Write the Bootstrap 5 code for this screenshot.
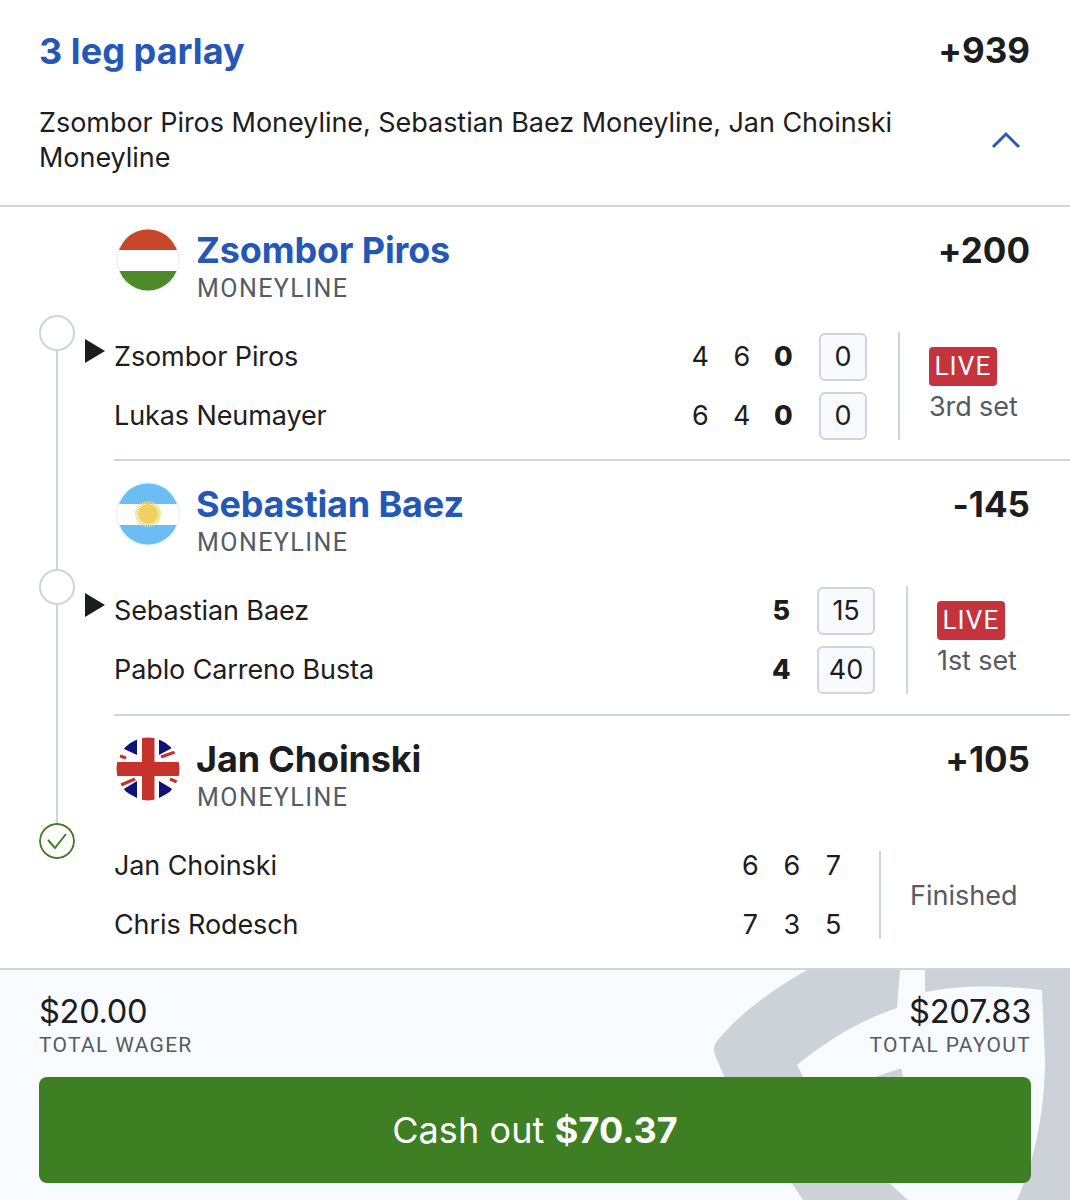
<!DOCTYPE html>
<html lang="en">
<head>
<meta charset="utf-8">
<title>3 leg parlay</title>
<link href="https://cdn.jsdelivr.net/npm/bootstrap@5.3.0/dist/css/bootstrap.min.css" rel="stylesheet">
<style>
html,body{margin:0;background:#fff}
body{font-family:"Inter","Liberation Sans",sans-serif;color:#1c1d1f;width:1070px;height:1200px;overflow:hidden;font-variant-ligatures:none}
.bet-head{height:207px;padding:0 40px 0 39px;border-bottom:2px solid #d0d4db}
.bet-top{height:101px}
.bet-title{font-size:36px;font-weight:700;color:#2557b7;line-height:1;letter-spacing:.05px}
.odds{font-size:35px;font-weight:700;line-height:1;color:#1c1d1f}
.bet-desc{font-size:27px;line-height:35px;width:870px;margin-top:4px;letter-spacing:-.04px}
.chev{width:30px;height:18px;margin-right:9px;margin-top:3px}
.legs-wrap{height:761px}
.tl-line{position:absolute;left:56px;top:144px;width:2px;height:474px;background:#d0d4db}
.tl-dot{position:absolute;left:39px;width:36px;height:36px;border-radius:50%;border:2px solid #d0d4db;background:#fff}
.tl-a{top:108px}.tl-b{top:362px}
.tl-c{top:616px;border:none;background:none}
.leg{margin-left:114px;padding-right:40px;height:254px;border-bottom:2px solid #d0d4db;padding-top:21px}
.leg+.leg{height:255px}
.leg-last{border-bottom:none}
.leg-head{height:83px;margin-left:2px}
.flag{width:64px;height:64px;flex:none;margin-right:17px}
.leg-name{font-size:36px;font-weight:700;line-height:44px;color:#2557b7;letter-spacing:-.15px;margin-left:-1px}
.leg-name.won{color:#1c1d1f}
.odds-leg{padding-top:5px}
.market{font-size:25px;line-height:30px;letter-spacing:1.45px;color:#555b63;font-family:"Roboto",sans-serif;margin-top:2px}
.score-block{margin-top:21px;height:108px;padding-right:13px}
.score-rows{flex:1 1 auto;display:flex;flex-direction:column;justify-content:space-between;padding-top:1px}
.score-row{height:48px;font-size:27px;letter-spacing:-.1px}
.p-name{position:relative;flex:1 1 auto}
.tri{position:absolute;left:-29px;top:2px;width:20px;height:24px}
.num{width:41.5px;text-align:center}
.num-b{font-weight:800}
.pt-box{width:48px;height:48px;border:2px solid #d0d4db;border-radius:6px;background:#f7faff;margin-left:15px;font-size:27px}
.pt-wide{width:58px}
.status{border-left:2px solid #d0d4db;padding-left:29px;margin-left:31px;color:#555b63;font-size:27px;line-height:34px;height:108px;flex:none;white-space:nowrap;letter-spacing:-.1px}
.live{display:inline-block;width:68px;height:39px;border-radius:4px;background:#c5333f;color:#fff;font-size:26px;line-height:39px;letter-spacing:1.2px;text-align:center;font-family:"Roboto",sans-serif;margin-top:-2px;margin-bottom:4px}
.st-1{width:119px}.st-2{width:111px}
.st-3{width:138px;margin-left:25px;height:88px;align-self:center;padding-top:1px;letter-spacing:0}
.foot{height:232px;background:#f8fbff;border-top:2px solid #d0d4db;padding:0 39px;overflow:hidden}
.mark-svg{position:absolute;left:0;top:-970px;width:1070px;height:1200px}
.foot-row{position:relative;height:107px;padding-top:21px}
.money{font-size:32.6px;line-height:40px;letter-spacing:-.3px}
.foot-lab{font-size:21px;line-height:26px;letter-spacing:1.3px;color:#555b63;font-family:"Roboto",sans-serif;margin-top:1px}
.cash{position:relative;width:992px;height:106px;background:#3d7f22;border:none;border-radius:8px;color:#fff;font-size:36px;padding:0;letter-spacing:.1px}
.cash b{font-weight:700}
.cash:hover,.cash:active{background:#3d7f22;color:#fff}
</style>
</head>
<body>
<header class="bet-head">
  <div class="bet-top d-flex justify-content-between align-items-center">
    <div class="bet-title">3 leg parlay</div>
    <div class="odds">+939</div>
  </div>
  <div class="d-flex justify-content-between align-items-center">
    <div class="bet-desc">Zsombor Piros Moneyline, Sebastian Baez Moneyline, Jan Choinski Moneyline</div>
    <svg class="chev" viewBox="0 0 30 18"><path d="M2 16 15 3 28 16" fill="none" stroke="#2a5bb0" stroke-width="3"/></svg>
  </div>
</header>

<main class="legs-wrap position-relative">
  <div class="tl-line"></div>
  <div class="tl-dot tl-a"></div>
  <div class="tl-dot tl-b"></div>
  <svg class="tl-dot tl-c" viewBox="0 0 36 36"><circle cx="18" cy="18" r="17" fill="#fff" stroke="#3d7f22" stroke-width="2"/><path d="M9 17 16 25 27 11" fill="none" stroke="#3d7f22" stroke-width="2"/></svg>

  <section class="leg">
    <div class="leg-head d-flex">
      <svg class="flag" viewBox="0 0 64 64"><defs><clipPath id="c1"><circle cx="32" cy="32" r="30.5"/></clipPath></defs><circle cx="32" cy="32" r="32" fill="#edf1ee"/><g clip-path="url(#c1)"><rect width="64" height="22" fill="#c8472a"/><rect y="22" width="64" height="21" fill="#fff"/><rect y="43" width="64" height="21" fill="#4f8a2a"/></g></svg>
      <div class="flex-grow-1">
        <div class="d-flex justify-content-between"><div class="leg-name">Zsombor Piros</div><div class="odds odds-leg">+200</div></div>
        <div class="market">MONEYLINE</div>
      </div>
    </div>
    <div class="score-block d-flex">
      <div class="score-rows">
        <div class="score-row d-flex align-items-center">
          <div class="p-name"><svg class="tri" viewBox="0 0 20 24"><path d="M0 0 20 12 0 24Z" fill="#1c1d1f"/></svg>Zsombor Piros</div>
          <div class="num">4</div><div class="num">6</div><div class="num num-b">0</div>
          <div class="pt-box d-flex align-items-center justify-content-center">0</div>
        </div>
        <div class="score-row d-flex align-items-center">
          <div class="p-name">Lukas Neumayer</div>
          <div class="num">6</div><div class="num">4</div><div class="num num-b">0</div>
          <div class="pt-box d-flex align-items-center justify-content-center">0</div>
        </div>
      </div>
      <div class="status st-1 d-flex flex-column justify-content-center align-items-start"><span class="live">LIVE</span><span>3rd set</span></div>
    </div>
  </section>

  <section class="leg">
    <div class="leg-head d-flex">
      <svg class="flag" viewBox="0 0 64 64"><defs><clipPath id="c2"><circle cx="32" cy="32" r="30.5"/></clipPath></defs><circle cx="32" cy="32" r="32" fill="#e9f4fc"/><g clip-path="url(#c2)"><rect width="64" height="22" fill="#6dbdf5"/><rect y="22" width="64" height="21" fill="#fff"/><rect y="43" width="64" height="21" fill="#6dbdf5"/></g><circle cx="32" cy="32" r="11.5" fill="none" stroke="#f0d873" stroke-width="3" stroke-dasharray="1.2 .8"/><circle cx="32" cy="32" r="10" fill="#f0d05e"/></svg>
      <div class="flex-grow-1">
        <div class="d-flex justify-content-between"><div class="leg-name">Sebastian Baez</div><div class="odds odds-leg">-145</div></div>
        <div class="market">MONEYLINE</div>
      </div>
    </div>
    <div class="score-block d-flex">
      <div class="score-rows">
        <div class="score-row d-flex align-items-center">
          <div class="p-name"><svg class="tri" viewBox="0 0 20 24"><path d="M0 0 20 12 0 24Z" fill="#1c1d1f"/></svg>Sebastian Baez</div>
          <div class="num num-b">5</div>
          <div class="pt-box pt-wide d-flex align-items-center justify-content-center">15</div>
        </div>
        <div class="score-row d-flex align-items-center">
          <div class="p-name">Pablo Carreno Busta</div>
          <div class="num num-b">4</div>
          <div class="pt-box pt-wide d-flex align-items-center justify-content-center">40</div>
        </div>
      </div>
      <div class="status st-2 d-flex flex-column justify-content-center align-items-start"><span class="live">LIVE</span><span>1st set</span></div>
    </div>
  </section>

  <section class="leg leg-last">
    <div class="leg-head d-flex">
      <svg class="flag" viewBox="0 0 64 64"><defs><clipPath id="c3"><circle cx="32" cy="32" r="31.5"/></clipPath></defs><g clip-path="url(#c3)"><rect width="64" height="64" fill="#fff"/><path d="M21 1V18L6 11ZM43 1V18L58 10ZM21 44V61L6 53ZM43 44V61L58 53Z" fill="#10127a"/><path d="M4 19 10 21M45 20 59 15M5 48 19 42M54 42 61 45" fill="none" stroke="#c5332c" stroke-width="3"/><rect x="26" y="0" width="12.5" height="64" fill="#c5332c"/><rect x="0" y="25" width="64" height="14" fill="#c5332c"/></g></svg>
      <div class="flex-grow-1">
        <div class="d-flex justify-content-between"><div class="leg-name won">Jan Choinski</div><div class="odds odds-leg">+105</div></div>
        <div class="market">MONEYLINE</div>
      </div>
    </div>
    <div class="score-block d-flex">
      <div class="score-rows">
        <div class="score-row d-flex align-items-center">
          <div class="p-name">Jan Choinski</div>
          <div class="num">6</div><div class="num">6</div><div class="num">7</div>
        </div>
        <div class="score-row d-flex align-items-center">
          <div class="p-name">Chris Rodesch</div>
          <div class="num">7</div><div class="num">3</div><div class="num">5</div>
        </div>
      </div>
      <div class="status st-3 d-flex flex-column justify-content-center align-items-start">Finished</div>
    </div>
  </section>
</main>

<footer class="foot position-relative">
  <svg class="mark-svg" viewBox="0 0 1070 1200"><path fill="#cdd2d8" d="M807 970H900L897 1008C860 1020 825 1042 797 1065L830 1130 908 1200H803L730 1090 715 1055Q712 1047 717 1041C740 1013 772 990 807 970ZM875 1077 899 1069Q902 1068 902 1072L903 1077ZM925 970H1070V1200H1017C1035 1160 1045 1110 1045 1060L1042 990C1000 985 960 985 925 992Z"/></svg>
  <div class="foot-row d-flex justify-content-between">
    <div><div class="money">$20.00</div><div class="foot-lab">TOTAL WAGER</div></div>
    <div class="text-end"><div class="money">$207.83</div><div class="foot-lab">TOTAL PAYOUT</div></div>
  </div>
  <button class="btn cash">Cash out <b>$70.37</b></button>
</footer>
</body>
</html>
